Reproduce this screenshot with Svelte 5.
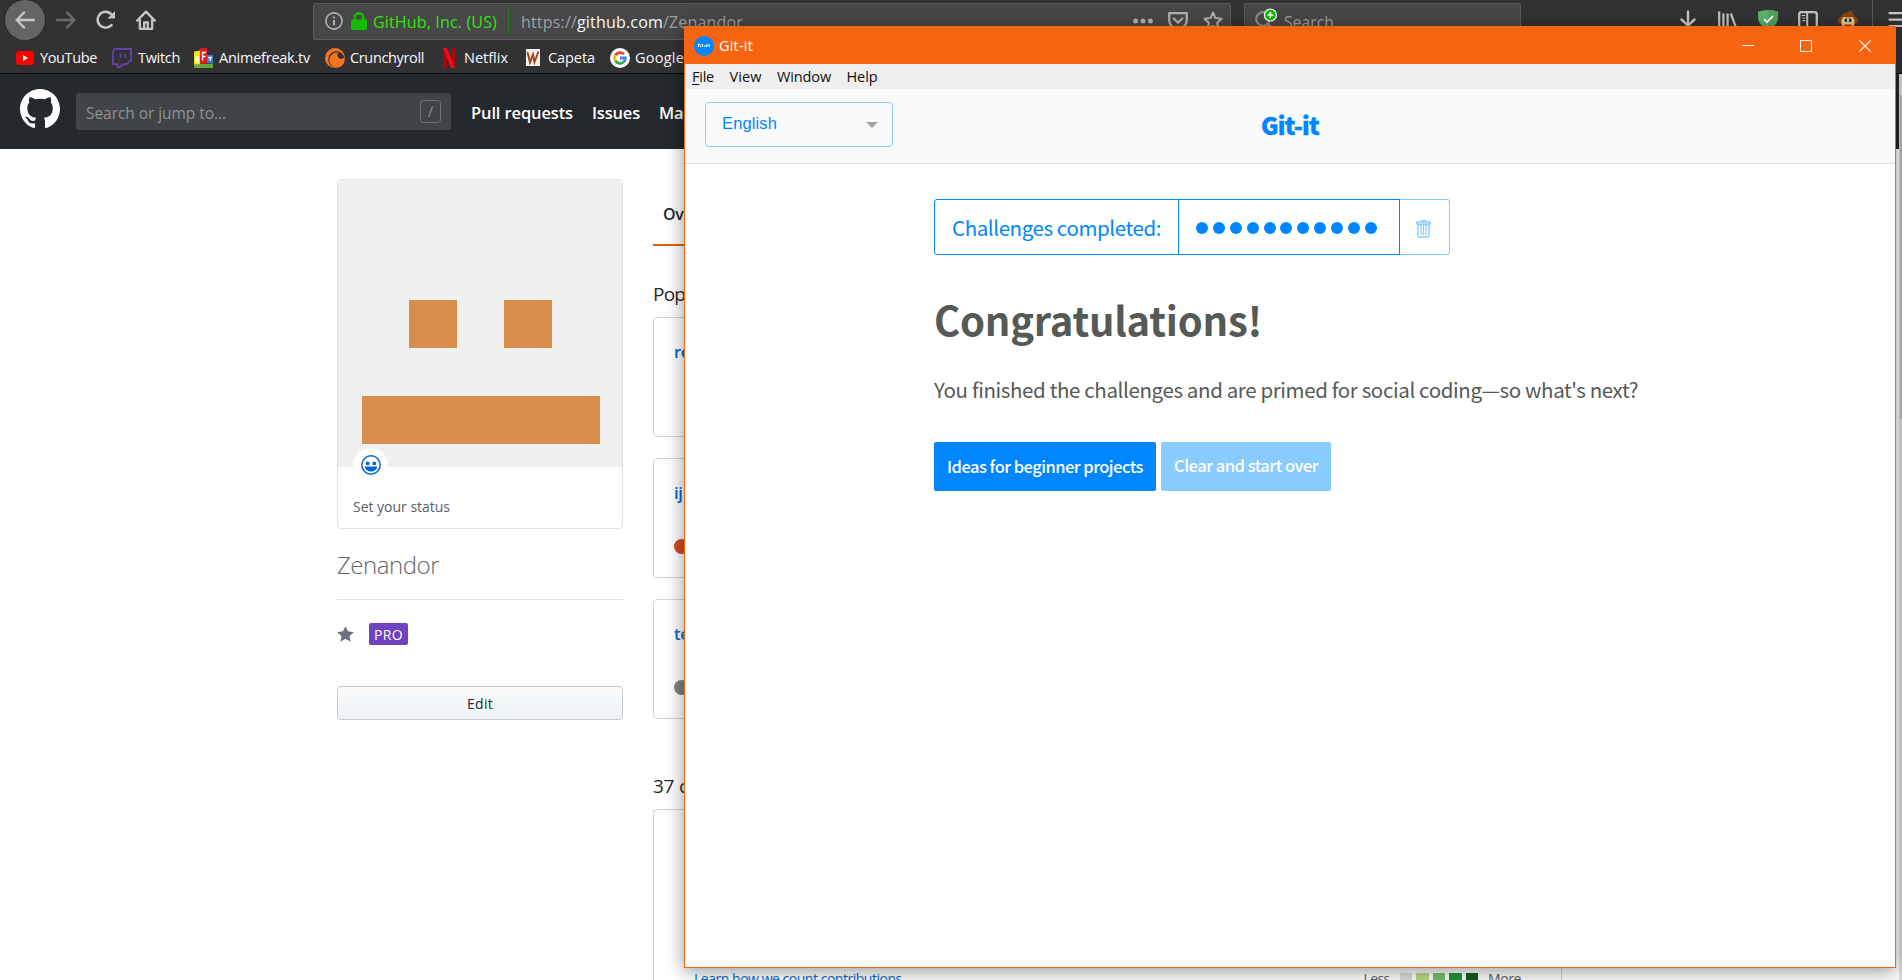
<script>
  const repos = [
    { name: 're', dot: null },
    { name: 'ij', dot: '#d84a27' },
    { name: 'te', dot: '#808080' }
  ];
  const menu = [
    ['View', 32],
    ['Window', 54],
    ['Help', 31]
  ];
  const levels = ['#dcdee2', '#bcd983', '#76c06c', '#22963b', '#185c25'];
  const dots = Array.from({ length: 11 });

  // Tracks a label out or in so that it occupies the given width.
  function fit(node, width) {
    const apply = () => {
      node.style.letterSpacing = '0px';
      const n = node.textContent.length;
      const natural = node.getBoundingClientRect().width;
      node.style.letterSpacing = (width - natural) / n + 'px';
    };
    apply();
    document.fonts?.ready.then(apply);
  }
</script>

<div class="desktop">
  <div class="browser">
    <div class="toolbar">
      <div class="back">
        <svg width="20" height="18" viewBox="0 0 20 18"><path d="M9 1.5L1.8 9L9 16.5M2 9H19" /></svg>
      </div>
      <svg class="ic fwd" width="20" height="18" viewBox="0 0 20 18"><path d="M11 1.5L18.2 9L11 16.5M18 9H1" /></svg>
      <svg class="ic reload" width="20" height="20" viewBox="0 0 20 20"><path d="M15.5 15.2A8 8 0 1 1 16.2 5.2" stroke-width="2.6" /><path d="M19 1V8.5H11.5Z" fill="#c6c6c7" stroke="none" /></svg>
      <svg class="ic home" width="20" height="20" viewBox="0 0 20 20"><path d="M1.2 10.6L10 1.6L18.8 10.6M3.8 9.5V18.8H16.2V9.5M8.2 18.5V12.3H11.8V18.5" stroke-width="2.3" stroke-linejoin="round" /></svg>

      <div class="urlbar">
        <svg class="ic info" width="18" height="18" viewBox="0 0 18 18"><circle cx="9" cy="9" r="8.1" stroke-width="1.6" /><path d="M9 8V13.2M9 4.4V6.3" stroke-width="2" stroke-linecap="butt" /></svg>
        <svg class="lock" width="16" height="18" viewBox="0 0 16 18"><rect x="0" y="7.5" width="16" height="10.5" rx="1.5" fill="#12bc00" /><path d="M3.8 9V5.4a4.2 4.2 0 0 1 8.4 0V9" fill="none" stroke="#12bc00" stroke-width="2.6" /></svg>
        <span class="t owner" use:fit={124}>GitHub, Inc. (US)</span>
        <i class="vr"></i>
        <span class="t dim" use:fit={56}>https://</span><span class="t bright" use:fit={86}>github.com</span><span class="t dim" use:fit={80}>/Zenandor</span>
        <div class="urlicons">
          <svg width="20" height="20" viewBox="0 0 20 20" fill="#b1b1b3"><circle cx="2.6" cy="10" r="2.5" /><circle cx="10" cy="10" r="2.5" /><circle cx="17.4" cy="10" r="2.5" /></svg>
          <svg class="ic dimic" width="20" height="20" viewBox="0 0 20 20"><path d="M1.2 2.2H18.8V9A8.8 8.8 0 0 1 1.2 9ZM5.7 7.5L10 11.6L14.3 7.5" stroke-width="2.3" stroke-linejoin="round" /></svg>
          <svg class="ic dimic" width="20" height="20" viewBox="0 0 20 20"><path d="M10 1.5L12.5 7.1L18.6 7.8L14.1 11.9L15.4 18L10 14.9L4.6 18L5.9 11.9L1.4 7.8L7.5 7.1Z" stroke-width="2" stroke-linejoin="round" /></svg>
        </div>
      </div>

      <div class="searchbar">
        <svg width="24" height="24" viewBox="0 0 24 24" fill="none"><circle cx="8" cy="11" r="6.8" stroke="#8a8a8c" stroke-width="2.2" /><path d="M13 16L18 21" stroke="#8a8a8c" stroke-width="2.6" /><circle cx="15.4" cy="7" r="6.6" fill="#fff" /><circle cx="15.4" cy="7" r="5.4" fill="#12bc00" /><path d="M15.4 4V10M12.4 7H18.4" stroke="#fff" stroke-width="1.7" /></svg>
        <span class="t" use:fit={50}>Search</span>
      </div>

      <div class="tools">
        <svg class="ic" width="20" height="20" viewBox="0 0 20 20"><path d="M10 1.5V15M3.5 9.5L10 15.6L16.5 9.5" stroke-width="2.4" /></svg>
        <svg class="ic" width="20" height="20" viewBox="0 0 20 20"><path d="M1.2 1.5V19M5.4 3.5V19M9.6 3.5V19M12.8 3.5L18.5 19" stroke-width="2.2" stroke-linecap="butt" /></svg>
        <svg width="20" height="20" viewBox="0 0 20 20"><path d="M0 1.8Q10-1.8 20 1.8V7C20 13 15.5 17.5 10 20C4.5 17.5 0 13 0 7Z" fill="#5bb46c" /><path d="M10-.1Q15 0 20 1.8V7C20 13 15.5 17.5 10 20Z" fill="#4fa55f" /><path d="M6 9.2L9 12.2L15 5.8" fill="none" stroke="#fff" stroke-width="1.8" /></svg>
        <svg class="ic" width="20" height="20" viewBox="0 0 20 20"><rect x="1.2" y="2.2" width="17.6" height="16.5" rx="2.2" stroke-width="2.3" /><path d="M9.2 2V18.5" stroke-width="2" /><path d="M3.7 5.5H7.2M4.5 8H7.2M4.5 10.7H7.2" stroke-width="1.2" stroke-linecap="butt" /></svg>
        <svg width="20" height="20" viewBox="0 0 20 20"><ellipse cx="2.7" cy="10.5" rx="2.4" ry="3.2" fill="#8a4a12" /><ellipse cx="17.3" cy="10.5" rx="2.4" ry="3.2" fill="#8a4a12" /><path d="M2.5 12C2 5 5 2.5 9 2.5L15 0L13.5 2.2L16 2.5L14.8 4C17.5 6 17.8 9 17.4 13L14 19H6Z" fill="#8a4209" /><path d="M3.5 13C3 7.500 6 6 10 7.700C14 6 17 7.500 16.500 13C16 17 13 19 10 19C7 19 4 17 3.500 13Z" fill="#efc78c" /><ellipse cx="7.800" cy="10.300" rx="1.300" ry="2" fill="#16382b" /><ellipse cx="12.200" cy="10.300" rx="1.300" ry="2" fill="#16382b" /><path d="M6 14.500H14L12.500 17.200H7.500Z" fill="#b3281a" /></svg>
        <i class="vr2"></i>
        <svg class="ic" width="20" height="20" viewBox="0 0 20 20"><path d="M1.500 3.200H19M1.500 9.600H19M1.500 16H19" stroke-width="2.200" /></svg>
      </div>
    </div>

    <div class="bookmarks">
      <svg style:margin-right="6px" width="18" height="14" viewBox="0 0 18 14"><rect width="18" height="14" rx="3" fill="#f00" /><path d="M7 4V10L12 7Z" fill="#fff" /></svg>
      <span style:width="72px"><b use:fit={57}>YouTube</b></span>
      <svg style:margin-right="6px" width="20" height="20" viewBox="0 0 20 20"><path d="M2.500 1H19V12L14.500 16.300H11L8 19H5.500V16.300H1V4.500Z" fill="#323234" stroke="#6441a5" stroke-width="1.900" /><path d="M8.500 5.500V10.300M13.300 5.500V10.300" stroke="#6441a5" stroke-width="1.800" /></svg>
      <span style:width="56px"><b use:fit={42}>Twitch</b></span>
      <svg style:margin-right="6px" width="19" height="20" viewBox="0 0 19 20"><path d="M0 3.500L6 2.500V17H0Z" fill="#f4e20c" /><path d="M6 .5L13 0L14 15L6 16Z" fill="#e21a22" /><path d="M13 7H19V15H13Z" fill="#2e7cd6" /><path d="M0 16.500L19 15.500V20H0Z" fill="#67a83a" /><path d="M8.500 12.500V4.500H12M8.500 8.500H11.500M2 15V8.500H4V15M2 11.500H4M14.200 9.500H18M16.200 9.500V13" fill="none" stroke="#fff" stroke-width="1.300" /></svg>
      <span style:width="106px"><b use:fit={91}>Animefreak.tv</b></span>
      <svg style:margin-right="5px" width="20" height="20" viewBox="0 0 20 20"><circle cx="10" cy="10" r="10" fill="#f47521" /><circle cx="11.500" cy="11.500" r="8.300" fill="#323234" /><path d="M19.500 13A7.600 7.600 0 1 1 13.500 4.600A3.600 3.600 0 0 0 17.800 10.300A4 4 0 0 0 19.600 9.800Z" fill="#f47521" /></svg>
      <span style:width="93px"><b use:fit={74}>Crunchyroll</b></span>
      <svg style:margin-right="9px" width="12" height="20" viewBox="0 0 12 20"><path d="M0 0H4V20H0ZM8 0H12V20H8Z" fill="#a80710" /><path d="M0 0H4L12 20H8Z" fill="#f20b17" /></svg>
      <span style:width="62px"><b use:fit={44}>Netflix</b></span>
      <svg style:margin-right="8px" width="14" height="17" viewBox="0 0 14 17"><rect width="14" height="17" fill="#f6f3ee" /><path d="M1.500 3L4 13.500L7 5.500L8.500 13L12.500 2.500" fill="none" stroke="#a9410e" stroke-width="1.900" /></svg>
      <span style:width="62px"><b use:fit={47}>Capeta</b></span>
      <svg style:margin-right="5px" width="20" height="20" viewBox="0 0 20 20" fill="none" stroke-width="2.800"><circle cx="10" cy="10" r="10" fill="#fff" /><path d="M5.400 7.200A5.400 5.400 0 0 1 13.900 6.200" stroke="#ea4335" /><path d="M5.400 12.800A5.600 5.600 0 0 1 5.400 7.200" stroke="#fbbc05" /><path d="M13.600 14A5.400 5.400 0 0 1 5.400 12.800" stroke="#34a853" /><path d="M10 10H15.400A5.400 5.400 0 0 1 13.600 14" stroke="#4285f4" /></svg>
      <span><b use:fit={49}>Google</b></span>
    </div>

    <div class="page">
      <div class="ghhead">
        <svg class="cat" width="40" height="40" viewBox="0 0 16 16"><path fill="#fff" fill-rule="evenodd" d="M8 0C3.580 0 0 3.580 0 8c0 3.540 2.290 6.530 5.470 7.590.4.070.550-.170.550-.380 0-.190-.010-.820-.010-1.490-2.010.370-2.530-.490-2.690-.940-.090-.230-.480-.940-.820-1.130-.280-.150-.680-.520-.010-.530.630-.010 1.080.580 1.230.820.720 1.210 1.870.870 2.330.660.070-.520.280-.870.510-1.070-1.780-.200-3.640-.890-3.640-3.950 0-.870.310-1.590.820-2.150-.080-.200-.360-1.020.080-2.120 0 0 .670-.210 2.200.820.640-.180 1.320-.270 2-.270.680 0 1.360.090 2 .270 1.530-1.040 2.200-.820 2.200-.820.440 1.100.160 1.920.080 2.120.510.560.820 1.270.820 2.150 0 3.070-1.870 3.750-3.650 3.950.290.250.540.730.540 1.480 0 1.070-.010 1.930-.010 2.200 0 .210.150.460.550.380A8.013 8.013 0 0 0 16 8c0-4.420-3.580-8-8-8z" /></svg>
        <div class="ghsearch"><span use:fit={140}>Search or jump to...</span><svg width="21" height="23" viewBox="0 0 21 23" fill="none" stroke="#6c7074"><rect x=".5" y=".5" width="20" height="22" rx="3" /><path d="M12.500 6.500L8.500 17" stroke="#8a8e91" stroke-width="1.200" /></svg></div>
        <b style:width="121px"><span use:fit={102}>Pull requests</span></b>
        <b style:width="67px"><span use:fit={48}>Issues</span></b>
        <b class="last"><span use:fit={97}>Marketplace</span></b>
      </div>

      <div class="ghbody">
        <aside>
          <div class="card">
            <div class="avatar">
              <div class="eyes"><i></i><i></i></div>
              <div class="mouth"></div>
            </div>
            <div class="face">
              <svg width="20" height="20" viewBox="0 0 20 20"><circle cx="10" cy="10" r="9.200" fill="none" stroke="#0366d6" stroke-width="1.500" /><circle cx="6.700" cy="8.400" r="1.900" fill="#0366d6" /><circle cx="13.300" cy="8.400" r="1.900" fill="#0366d6" /><path d="M3.800 11.500H16.200C15.800 14.800 13.200 16.600 10 16.600C6.800 16.600 4.200 14.800 3.800 11.500Z" fill="#0366d6" /></svg>
            </div>
            <div class="status"><span use:fit={97}>Set your status</span></div>
          </div>
          <div class="login"><span use:fit={102}>Zenandor</span></div>
          <div class="badges">
            <svg width="17" height="19" viewBox="0 0 14 16"><path fill="#6a737d" d="M14 6l-4.900-.640L7 1 4.900 5.360 0 6l3.600 3.260L2.670 14 7 11.670 11.330 14l-.930-4.740L14 6z" /></svg>
            <em><span use:fit={29}>PRO</span></em>
          </div>
          <div class="edit"><span use:fit={26}>Edit</span></div>
        </aside>
        <section>
          <div class="tabs"><span use:fit={70}>Overview</span></div>
          <h2 class="pop"><span use:fit={64}>Popular</span></h2>
          {#each repos as r}
            <div class="repo">
              <strong>{r.name}</strong>
              {#if r.dot}<i style:background={r.dot}></i>{/if}
            </div>
          {/each}
          <h2 class="contrib"><span use:fit={141}>37 contributions</span></h2>
          <div class="graph">
            <a href="#contributions"><span use:fit={211}>Learn how we count contributions.</span></a>
            <div class="legend">
              <span class="less" use:fit={26}>Less</span>
              {#each levels as c}<i style:background={c}></i>{/each}
              <span class="more" use:fit={33}>More</span>
            </div>
          </div>
        </section>
        <div class="scroll"><i></i></div>
      </div>
    </div>
  </div>

  <div class="window">
    <div class="title">
      <svg width="20" height="20" viewBox="0 0 20 20"><circle cx="10" cy="10" r="10" fill="#0087ff" /><path d="M4 8.200H6.500M4.500 8V11M6.500 9.500V11M8.500 8V11M11 9V11M12.800 8V11M15 8V11" stroke="#fff" stroke-width="1.100" /></svg>
      <span use:fit={34}>Git-it</span>
      <svg class="ctl" width="129" height="12" viewBox="0 0 129 12" fill="none" stroke="#fff"><path d="M0 5.500H12" /><rect x="58.500" y=".5" width="11" height="11" /><path d="M117.300.3L128.700 11.700M128.700.3L117.300 11.700" stroke-width="1.100" /></svg>
    </div>
    <div class="menu">
      <span use:fit={22}><u>F</u>ile</span>
      {#each menu as [label, w]}<span use:fit={w}>{label}</span>{/each}
    </div>
    <header>
      <div class="select"><span use:fit={55}>English</span><i></i></div>
      <h1><span use:fit={58}>Git-it</span></h1>
    </header>
    <main>
      <div class="progress">
        <div class="label"><span use:fit={209}>Challenges completed:</span></div>
        <div class="dots">{#each dots as _}<i></i>{/each}</div>
        <div class="trash">
          <svg width="15" height="18" viewBox="0 0 15 18" fill="none" stroke="#88cbff"><path d="M2 4.500H13V15.500Q13 17 11.500 17H3.500Q2 17 2 15.500Z" stroke-width="1.400" /><rect x=".6" y="1.900" width="13.800" height="2.300" rx=".6" stroke-width="1.200" fill="#d5ecff" /><path d="M5 1.500Q5 .6 6 .6H9Q10 .6 10 1.500M5 5V15M7.500 5V15M10 5V15" stroke-width="1.200" /></svg>
        </div>
      </div>
      <h3><span use:fit={328}>Congratulations!</span></h3>
      <p><span use:fit={704}>You finished the challenges and are primed for social coding—so what's next?</span></p>
      <div class="buttons">
        <div class="btn"><span use:fit={196}>Ideas for beginner projects</span></div>
        <div class="btn light"><span use:fit={144}>Clear and start over</span></div>
      </div>
    </main>
  </div>
</div>

<style>
  :global(body) { overflow: hidden; }
  .desktop { position: relative; width: 1902px; height: 980px; overflow: hidden; background: #fff; font-family: "Open Sans", "Noto Sans", sans-serif; box-sizing: border-box; }
  .desktop * { box-sizing: border-box; }
  span, .bookmarks b { display: inline-block; white-space: nowrap; }
  svg { display: block; flex: none; }
  .browser { display: flex; flex-direction: column; height: 980px; }

  .toolbar { height: 40px; background: #323234; display: flex; align-items: center; flex: none; }
  .back { width: 40px; height: 40px; margin-left: 5px; border-radius: 50%; background: #646465; box-shadow: 0 0 0 1px #252526; display: flex; align-items: center; justify-content: center; flex: none; }
  .back svg, .ic { fill: none; stroke: #c6c6c7; stroke-width: 2.4; stroke-linecap: round; }
  .fwd { margin-left: 11px; stroke: #6b6b6d; }
  .reload { margin-left: 20px; }
  .home { margin-left: 20px; }
  .urlbar { margin-left: 157px; width: 918px; height: 37px; margin-top: 2px; background: #474749; border: 1px solid #5b5b5d; border-radius: 2px; display: flex; align-items: center; position: relative; flex: none; }
  .t { font-size: 16px; line-height: 22px; position: relative; top: 1px; }
  .info { margin-left: 11px; stroke: #b1b1b3; }
  .lock { margin: 0 6px 0 8px; }
  .owner { color: #30e60b; }
  .vr { width: 1px; height: 26px; background: #237f16; margin: 0 12px 0 11px; }
  .dim { color: #a0a0a2; }
  .bright { color: #f9f9fa; }
  .urlicons { margin-left: auto; display: flex; gap: 15px; margin-right: 7px; }
  .dimic { stroke: #b1b1b3; }
  .searchbar { margin: 2px 0 0 13px; width: 277px; height: 37px; background: #474749; border: 1px solid #5b5b5d; border-radius: 2px; display: flex; align-items: center; padding-left: 10px; color: #a0a0a2; flex: none; }
  .searchbar .t { margin-left: 5px; font-size: 15.5px; }
  .searchbar svg { margin-top: -2px; }
  .tools { display: flex; gap: 20px; margin-left: 157px; align-items: center; }
  .vr2 { width: 1px; height: 40px; background: #5b5b5d; margin: 0 -5px 0 -6px; }

  .bookmarks { height: 34px; padding: 2px 0 0 16px; background: #323234; border-bottom: 1px solid #0c0c0d; display: flex; align-items: center; color: #f9f9fa; font-size: 14.5px; line-height: 20px; flex: none; }
  .bookmarks b { font-weight: 400; padding-top: 1px; }

  .page { flex: 1; display: flex; flex-direction: column; min-height: 0; }
  .ghhead { height: 75px; background: #24292e; display: flex; align-items: center; padding-left: 20px; color: #fff; flex: none; }
  .cat { margin-top: -6px; }
  .ghsearch { margin: 0 20px 0 16px; width: 375px; height: 37px; border-radius: 3px; background: #3f4448; padding: 0 10px; display: flex; align-items: center; justify-content: space-between; font-size: 15.5px; color: #8f9396; }
  .ghsearch span { padding-top: 3px; }
  .ghhead b { font-weight: 600; font-size: 16.5px; padding-top: 2px; flex: none; }
  .ghhead .last { width: 24px; overflow: hidden; }

  .ghbody { display: flex; flex: 1; min-height: 0; }
  aside { width: 286px; margin: 30px 30px 0 337px; flex: none; }
  .card { height: 350px; border: 1px solid #dfe2e5; border-radius: 4px; position: relative; overflow: hidden; }
  .avatar { height: 287px; background: #f0f0f0; padding: 120px 0 0 23.5px; }
  .eyes { display: flex; gap: 47px; padding-left: 47.5px; }
  .eyes i { width: 48px; height: 48px; background: #d88e4a; }
  .mouth { width: 238px; height: 48px; margin-top: 48px; background: #d88e4a; }
  .face { position: absolute; left: 15px; top: 267.5px; width: 35px; height: 35px; border-radius: 50%; background: #fff; display: flex; align-items: center; justify-content: center; }
  .status { padding: 30px 0 0 15px; font-size: 14px; line-height: 20px; color: #586069; }
  .login { font-size: 24px; font-weight: 300; color: #666; line-height: 30px; padding-top: 21px; height: 71px; border-bottom: 1px solid #e1e4e8; }
  .badges { display: flex; align-items: center; margin-top: 23px; height: 22px; }
  em { margin-left: 15px; width: 39px; height: 22px; border-radius: 2px; background: #6f42c1; color: #fff; font-style: normal; font-size: 14px; line-height: 23px; text-align: center; }
  .edit { margin-top: 41px; height: 34px; border: 1px solid #c4c8cc; border-radius: 4px; background: linear-gradient(#fafbfc, #eff3f6 90%); text-align: center; font-size: 14px; line-height: 32px; padding-top: 1px; color: #24292e; }

  section { width: 909px; display: flex; flex-direction: column; flex: none; }
  .tabs { height: 97px; width: 92px; border-bottom: 2px solid #e36209; padding: 53px 0 0 10px; font-size: 16px; font-weight: 600; line-height: 24px; color: #24292e; flex: none; }
  h2 { margin: 0; font-weight: 400; font-size: 19px; line-height: 28px; color: #24292e; flex: none; }
  .pop { height: 71px; padding-top: 34px; }
  .repo { height: 120px; flex: none; width: 440px; border: 1px solid #d1d5da; border-radius: 4px; margin-bottom: 21px; padding: 22px 0 0 20px; display: flex; flex-direction: column; }
  .repo strong { font-size: 16.5px; font-weight: 600; color: #0366d6; line-height: 24px; letter-spacing: -.3px; }
  .repo i { width: 15px; height: 15px; border-radius: 50%; margin-top: 34px; }
  .contrib { height: 69px; padding-top: 32px; }
  .graph { flex: 1; min-height: 171px; border: 1px solid #d1d5da; border-bottom: 0; border-radius: 4px 4px 0 0; display: flex; align-items: flex-start; padding: 159px 40px 0 40px; font-size: 14px; line-height: 20px; }
  .graph a { color: #0366d6; text-decoration: none; }
  .legend { display: flex; align-items: center; margin-left: auto; gap: 4px; color: #586069; }
  .legend i { width: 12.500px; height: 13px; }
  .less { margin-right: 6px; }
  .more { margin-left: 6px; }
  .scroll { margin: -75px 0 0 auto; width: 3px; height: 906px; background: #e0e0e1; padding: 21px 0 0 1px; }
  .scroll i { display: block; height: 324px; background: #bcbcbd; }

  .window { position: absolute; left: 684px; top: 26px; width: 1212px; height: 942px; border: 1px solid #f8640f; background: #fff; box-shadow: 0 3px 18px rgba(0, 0, 0, .42); display: flex; flex-direction: column; }
  .title { height: 37px; background: #f8640f; color: #fff; display: flex; align-items: center; padding-left: 9px; font-size: 14.5px; line-height: 20px; flex: none; }
  .title span { margin-left: 5px; }
  .ctl { margin: 0 24px 0 auto; }
  .menu { height: 25px; background: #efefef; display: flex; align-items: center; gap: 15.500px; padding-left: 7px; font-size: 14.5px; line-height: 20px; color: #111; flex: none; }
  .menu u { text-underline-offset: 2px; }
  header { height: 75px; background: #fafafa; border-bottom: 1px solid #dedede; padding: 13px 20px; display: grid; grid-template-columns: 188px 1fr 188px; flex: none; }
  .select { height: 45px; border: 1px solid #88cbff; border-radius: 4px; display: flex; align-items: center; justify-content: space-between; padding: 0 14px 2px 16px; font: 16.500px "Liberation Sans", Arial, sans-serif; color: #0087ff; }
  .select i { border: 6.500px solid transparent; border-top-color: #a0a0a0; border-bottom: 0; margin-top: 3px; }
  header h1, h3, p { margin: 0; }
  header h1, main { font-family: "Noto Sans CJK SC", "Noto Sans CJK JP", sans-serif; }
  header h1 { font-size: 24px; font-weight: 900; line-height: 45px; color: #0087ff; text-align: center; -webkit-text-stroke: .4px #0087ff; }
  main { padding: 35px 0 0 249px; color: #555a56; }
  .progress { display: flex; height: 56px; }
  .label { width: 245px; border: 1px solid #0087ff; border-radius: 3px 0 0 3px; color: #0087ff; font-size: 20.500px; line-height: 54px; padding-left: 17px; }
  .dots { width: 221px; border: 1px solid #0087ff; border-left: 0; display: flex; align-items: center; gap: 4.900px; padding-left: 17px; }
  .dots i { width: 12px; height: 12px; border-radius: 50%; background: #0087ff; margin-top: 2px; }
  .trash { width: 50px; border: 1px solid #88cbff; border-left: 0; border-radius: 0 3px 3px 0; display: flex; align-items: center; padding: 4px 0 0 16px; }
  h3 { font-size: 40px; font-weight: 700; line-height: 50px; margin-top: 39px; }
  p { font-size: 20.500px; line-height: 30px; margin-top: 30px; }
  .buttons { display: flex; gap: 5px; margin-top: 38px; }
  .btn { width: 222px; height: 49px; border-radius: 2px; background: #0087ff; color: #fff; font-size: 16.500px; font-weight: 500; line-height: 48px; text-align: center; }
  .light { width: 170px; background: #88cbff; line-height: 46px; }
</style>
